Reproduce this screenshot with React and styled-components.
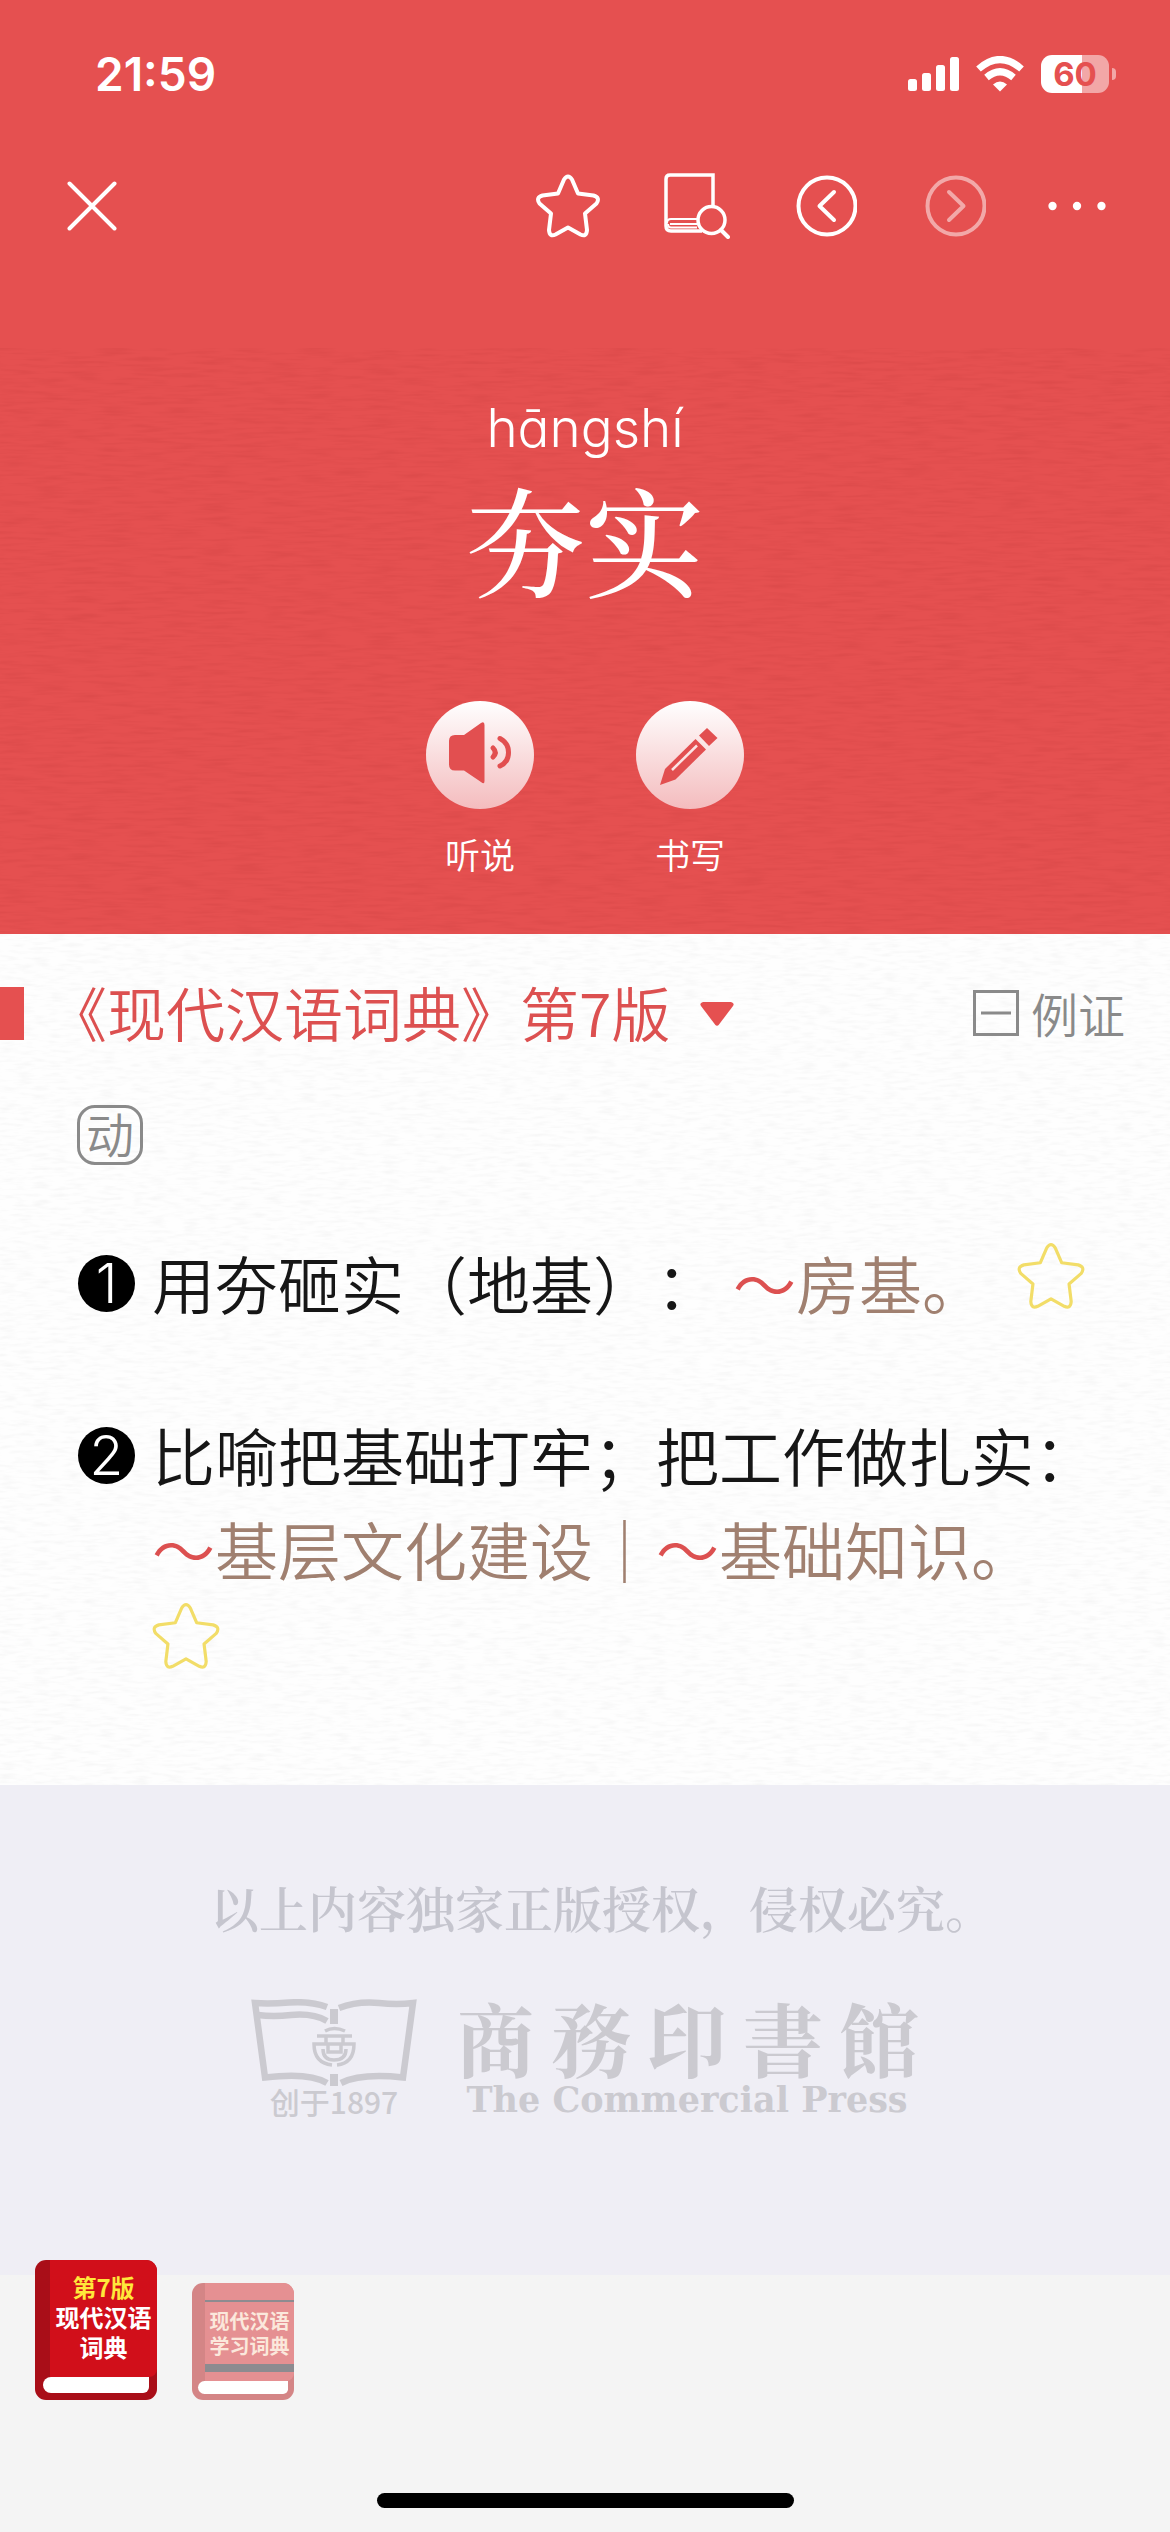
import React from "react";
import styled, { createGlobalStyle } from "styled-components";

const GlobalStyle = createGlobalStyle`
 * {
   box-sizing: border-box;
 }
 body {
   margin: 0;
   background-color: #f4f4f4;
   font-family: "Noto Sans CJK SC", sans-serif;
   text-spacing-trim: space-all;
 }
 button {
   border: 0;
   padding: 0;
   background: none;
   color: inherit;
   font: inherit;
   cursor: pointer;
 }
 h1, h2, p, ol {
   margin: 0;
   padding: 0;
   font-weight: inherit;
 }
 svg {
   display: block;
 }
`;

const Page = styled.div`
 display: flex;
 flex-direction: column;
 min-height: 100vh;
`;

const Header = styled.header`
 background-color: #e55050;
 color: white;
`;

const StatusBar = styled.div`
 display: flex;
 align-items: center;
 justify-content: space-between;
 height: 148px;
 padding: 0 54px 0 95px;
`;

const Clock = styled.time`
 font-family: Inter, sans-serif;
 font-size: 46px;
 font-weight: 600;
`;

const StatusIcons = styled.div`
 display: flex;
 align-items: center;
 gap: 17px;
`;

const BatteryGroup = styled.div`
 display: flex;
 align-items: center;
 gap: 3px;
`;

const Battery = styled.div`
 width: 68px;
 height: 38px;
 border-radius: 11px;
 background: linear-gradient(to right, white 60%, #f2a7a7 60%);
 color: #e55050;
 font-family: Inter, sans-serif;
 font-size: 33px;
 font-weight: 700;
 line-height: 38px;
 text-align: center;
`;

const BatteryCap = styled.div`
 width: 4px;
 height: 12px;
 border-radius: 0 4px 4px 0;
 background-color: #f2a7a7;
`;

const Toolbar = styled.nav`
 display: flex;
 align-items: center;
 justify-content: space-between;
 height: 116px;
 padding: 0 64px 0 56px;
`;

const ToolGroup = styled.div`
 display: flex;
 gap: 57px;
`;

const ToolButton = styled.button`
 display: flex;
 align-items: center;
 justify-content: center;
 width: ${(props) => (props.$narrow ? "58px" : "72px")};
 height: 72px;
 opacity: ${(props) => (props.disabled ? 0.5 : 1)};
`;

const Hero = styled.section`
 position: relative;
 display: flex;
 flex-direction: column;
 align-items: center;
 height: 670px;
 padding-top: 128px;
`;

const Texture = styled.svg`
 position: absolute;
 left: 0;
 top: ${(props) => props.$top || "0"};
 width: 100%;
 height: calc(100% - ${(props) => props.$top || "0px"});
 pointer-events: none;
`;

const Pinyin = styled.p`
 position: relative;
 font-family: Inter, "Noto Sans", sans-serif;
 font-feature-settings: "cv11";
 font-size: 53px;
 font-weight: 300;
 line-height: 72px;
`;

const Headword = styled.h1`
 position: relative;
 font-family: "Noto Serif CJK SC", "Noto Sans CJK SC", serif;
 font-size: 119px;
 font-weight: 500;
 line-height: 148px;
`;

const HeroActions = styled.div`
 position: relative;
 display: flex;
 gap: 102px;
 margin-top: 89px;
`;

const HeroAction = styled.button`
 display: flex;
 flex-direction: column;
 align-items: center;
 gap: 20px;
 font-size: 35px;
 font-weight: 350;
 line-height: 50px;
`;

const ActionDisc = styled.span`
 width: 108px;
 height: 108px;
 border-radius: 50%;
 background: linear-gradient(to bottom, white, #f4bcbe);
`;

const Entry = styled.main`
 position: relative;
 background-color: #fefefe;
 padding-bottom: 115px;
`;

const SourceRow = styled.div`
 position: relative;
 display: flex;
 align-items: center;
 height: 158px;
 padding-right: 45px;
`;

const Marker = styled.span`
 width: 24px;
 height: 53px;
 margin-right: 24px;
 background-color: #e55050;
`;

const SourceButton = styled.button`
 display: flex;
 align-items: center;
 gap: 30px;
 color: #dc5050;
 font-size: 59px;
 font-weight: 350;
 line-height: 76px;
 padding-bottom: 3px;
`;

const ExampleToggle = styled.button`
 display: flex;
 align-items: center;
 gap: 12px;
 margin-left: auto;
 color: #8a8a8a;
 font-size: 47px;
 font-weight: 350;
 line-height: 64px;
`;

const WordClass = styled.span`
 position: relative;
 display: block;
 width: 66px;
 height: 60px;
 margin: 13px 0 70px 77px;
 border: 3px solid #8a8a8a;
 border-radius: 18px;
 color: #8a8a8a;
 font-size: 48px;
 font-weight: 350;
 line-height: 48px;
 text-align: center;
`;

const SenseList = styled.ol`
 position: relative;
 display: flex;
 flex-direction: column;
 gap: 78px;
 padding: 0 48px 0 78px;
 list-style: none;
`;

const Sense = styled.li`
 display: flex;
 align-items: flex-start;
 gap: 17px;
`;

const SenseNumber = styled.span`
 flex: none;
 width: 57px;
 height: 57px;
 margin-top: 20px;
 border-radius: 50%;
 background-color: black;
 color: white;
 font-family: Inter, sans-serif;
 font-size: 55px;
 font-weight: 300;
 line-height: 57px;
 text-align: center;
`;

const SenseBody = styled.div`
 flex: 1;
 display: flex;
 flex-wrap: wrap;
 align-items: flex-start;
 column-gap: 32px;
`;

const SenseText = styled.p`
 color: #161616;
 font-size: 63px;
 font-weight: 350;
 line-height: 94px;
`;

const Example = styled.span`
 color: #a08070;
`;

const Tilde = styled.span`
 color: #dc5050;
`;

const StarButton = styled.button`
 margin-top: 7px;
`;

const Publisher = styled.section`
 display: flex;
 flex-direction: column;
 align-items: center;
 height: 490px;
 padding-top: 86px;
 background-color: #efeef5;
 color: #cbcad0;
`;

const Notice = styled.p`
 width: 750px;
 color: #c5c5ce;
 font-family: "Noto Serif CJK SC", "Noto Sans CJK SC", serif;
 font-size: 49px;
 font-weight: 600;
 line-height: 72px;
 white-space: nowrap;
`;

const Brand = styled.div`
 display: flex;
 gap: 38px;
 margin-top: 56px;
`;

const BrandMark = styled.div`
 display: flex;
 flex-direction: column;
 align-items: center;
 font-size: 30px;
 font-weight: 500;
 line-height: 28px;
`;

const BrandName = styled.div`
 display: flex;
 flex-direction: column;
 align-items: center;
`;

const BrandChinese = styled.div`
 display: flex;
 gap: 16px;
 font-family: "Noto Serif CJK TC", "Noto Sans CJK TC", serif;
 font-size: 80px;
 font-weight: 700;
 line-height: 76px;
`;

const BrandEnglish = styled.div`
 font-family: "DejaVu Serif", serif;
 font-size: 35px;
 font-weight: 700;
 line-height: 50px;
 white-space: nowrap;
`;

const Shelf = styled.footer`
 position: relative;
 flex: 1;
 display: flex;
 flex-direction: column;
 align-items: center;
 justify-content: space-between;
 padding: 0 35px 24px;
`;

const Books = styled.div`
 align-self: flex-start;
 display: flex;
 align-items: flex-end;
 gap: 35px;
 margin-top: -15px;
`;

const BookButton = styled.button`
 display: flex;
 flex-direction: column;
 width: ${(props) => (props.$active ? "122px" : "102px")};
 height: ${(props) => (props.$active ? "140px" : "117px")};
 border-radius: 11px;
 overflow: hidden;
 background-color: ${(props) => (props.$active ? "#a90e18" : "#d48586")};
`;

const BookCover = styled.span`
 flex: 1;
 align-self: stretch;
 display: flex;
 flex-direction: column;
 justify-content: center;
 margin-left: ${(props) => (props.$active ? "15px" : "13px")};
 padding-bottom: ${(props) => (props.$active ? "4px" : "0")};
 border-radius: 0 0 8px 0;
 background-color: ${(props) => (props.$active ? "#d10f1a" : "#e59092")};
 color: ${(props) => (props.$active ? "white" : "#fbe8dc")};
 font-size: ${(props) => (props.$active ? "24px" : "20px")};
 font-weight: 700;
 line-height: ${(props) => (props.$active ? "30px" : "25px")};
 text-align: center;
 white-space: nowrap;
`;

const CoverBand = styled.span`
 height: ${(props) => (props.$thick ? "8px" : "2px")};
 margin: ${(props) => (props.$thick ? "6px 0 0" : "8px 0 6px")};
 background-color: #8d8b90;
`;

const Edition = styled.span`
 color: #ffe83b;
`;

const BookPages = styled.span`
 width: ${(props) => (props.$active ? "106px" : "90px")};
 height: ${(props) => (props.$active ? "16px" : "13px")};
 margin: ${(props) => (props.$active ? "0 8px 7px" : "0 6px 6px")};
 border-radius: 8px 0 6px 8px;
 background-color: white;
`;

const HomeIndicator = styled.div`
 width: 417px;
 height: 15px;
 border-radius: 8px;
 background-color: black;
`;

const PaperTexture = ({ id, top, frequency, matrix }) => (
  <Texture $top={top} aria-hidden="true">
    <filter id={id} x="0" y="0" width="100%" height="100%">
      <feTurbulence type="fractalNoise" baseFrequency={frequency} numOctaves="2" seed="4" />
      <feColorMatrix type="matrix" values={matrix} />
    </filter>
    <rect width="100%" height="100%" filter={`url(#${id})`} />
  </Texture>
);

const Star = ({ size, stroke, strokeWidth }) => (
  <svg width={size} height={size} viewBox="0 0 64 64" fill="none" stroke={stroke} strokeWidth={strokeWidth} strokeLinejoin="round">
    <path d="M28 5.500Q32 -0.500 36 5.500L42 19.500L57.500 21.500Q64.500 23.500 60.500 29.500L49 39.500L51 56Q50.500 63.500 44.500 60.500L32 53.500L19.500 60.500Q13.500 63.500 13 56L15 39.500L3.500 29.500Q-.5 23.500 6.500 21.500L22 19.500Z" />
  </svg>
);

const SignalIcon = () => (
  <svg width="51" height="34" viewBox="0 0 51 34" fill="white">
    <rect x="0" y="22" width="9" height="12" rx="2.500" />
    <rect x="14" y="16" width="9" height="18" rx="2.500" />
    <rect x="28" y="8" width="9" height="26" rx="2.500" />
    <rect x="42" y="0" width="9" height="34" rx="2.500" />
  </svg>
);

const WifiIcon = () => (
  <svg width="48" height="36" viewBox="0 0 48 36">
    <g fill="none" stroke="white" strokeWidth="7">
      <path d="M2.500 13Q24 -6 45.500 13" />
      <path d="M10.500 21.500Q24 10 37.500 21.500" />
    </g>
    <path d="M17 28.500Q24 22.500 31 28.500L24 35.500Z" fill="white" />
  </svg>
);

const CloseIcon = () => (
  <svg width="50" height="50" viewBox="0 0 50 50" stroke="white" strokeWidth="4" strokeLinecap="round">
    <path d="M2.500 2.500L47.500 47.500M47.500 2.500L2.500 47.500" />
  </svg>
);

const BookSearchIcon = () => (
  <svg width="66" height="66" viewBox="0 0 66 66" fill="none" stroke="white" strokeWidth="3.500">
    <path d="M49 33V2H6Q2 2 2 6V53Q2 58 7 58H38" />
    <path d="M33 46H7Q3 46 3 50M33 51H6M33 54.500H7Q4 54.500 4 51" strokeWidth="2" />
    <circle cx="47.500" cy="47" r="13.500" />
    <path d="M57 57L64 64" strokeLinecap="round" strokeWidth="4" />
  </svg>
);

const ArrowIcon = ({ forward }) => (
  <svg width="62" height="62" viewBox="0 0 62 62" fill="none" stroke="white" strokeWidth="4">
    <circle cx="32" cy="31" r="28.500" />
    <path
      d={forward ? "M25 17L39.500 31L25 45" : "M39 17L24.500 31L39 45"}
      strokeLinecap="round"
      strokeLinejoin="round"
    />
  </svg>
);

const MoreIcon = () => (
  <svg width="64" height="10" viewBox="0 0 64 10" fill="white">
    <circle cx="5" cy="5" r="4.600" />
    <circle cx="32" cy="5" r="4.600" />
    <circle cx="59" cy="5" r="4.600" />
  </svg>
);

const SpeakerIcon = () => (
  <svg width="108" height="108" viewBox="0 0 108 108" fill="#e24f50">
    <path d="M29 34H38L55 22Q58.500 20 58.500 24V80Q58.500 84 55 81L38 69.500H29Q23 69.500 23 63.500V40Q23 34 29 34Z" />
    <g fill="none" stroke="#e24f50" strokeWidth="5" strokeLinecap="round">
      <path d="M67 47Q71.500 51.500 67 56" />
      <path d="M74 37.500Q82.500 42 82.500 51.500Q82.500 61 74 65" />
    </g>
  </svg>
);

const PencilIcon = () => (
  <svg width="108" height="108" viewBox="0 0 108 108" fill="#e24f50">
    <path d="M24 84L29 68L59.500 38L70 48.500L39.500 78.500Z" />
    <path d="M36 69L61 44.500" stroke="#fbe3e4" strokeWidth="2.500" />
    <path d="M63 34.500L71 27L81.500 37L73 45Z" />
  </svg>
);

const CaretIcon = () => (
  <svg width="34" height="28" viewBox="0 0 34 28" fill="#e55050">
    <path d="M3 4H31Q35 5 33 8L19 26.500Q17 29 15 26.500L1 8Q-1 5 3 4Z" />
  </svg>
);

const CollapseIcon = () => (
  <svg width="46" height="46" viewBox="0 0 46 46" fill="none" stroke="#8a8a8a" strokeWidth="3">
    <rect x="1.500" y="1.500" width="43" height="43" />
    <path d="M8 23H38" />
  </svg>
);

const PublisherLogo = () => (
  <svg width="166" height="88" viewBox="0 0 166 88" fill="none" stroke="#cbcad0">
    <g strokeWidth="6.500">
      <path d="M76 8Q60 2 38 3.500Q18 5 4 4L14 78.500Q58 73 76 84" />
      <path d="M7 16Q22 18 40 16Q62 14 76 22" />
      <path d="M88 9Q106 2 128 4Q146 6 162 4L152 78.500Q110 74 90 84" />
    </g>
    <path d="M83 10V25M83 75V87" strokeWidth="8" />
    <g strokeWidth="3.500">
      <path d="M74 32Q83 27 94 32" />
      <path d="M66 37H101" />
      <path d="M75 38V45M92 38V45" />
      <path d="M81 66Q63 64 63 45H103Q103 64 86 66" />
      <path d="M72 50Q72 61 83 61Q95 61 95 50" />
      <path d="M77 45V53H90V45" />
    </g>
  </svg>
);

class App extends React.Component {
  render() {
    return (
      <Page>
        <GlobalStyle />
        <Header>
          <StatusBar>
            <Clock>21:59</Clock>
            <StatusIcons>
              <SignalIcon />
              <WifiIcon />
              <BatteryGroup>
                <Battery>60</Battery>
                <BatteryCap />
              </BatteryGroup>
            </StatusIcons>
          </StatusBar>
          <Toolbar>
            <ToolButton aria-label="关闭"><CloseIcon /></ToolButton>
            <ToolGroup>
              <ToolButton aria-label="收藏"><Star size={64} stroke="white" strokeWidth={4} /></ToolButton>
              <ToolButton aria-label="查词典"><BookSearchIcon /></ToolButton>
              <ToolButton aria-label="后退"><ArrowIcon /></ToolButton>
              <ToolButton aria-label="前进" disabled><ArrowIcon forward /></ToolButton>
              <ToolButton aria-label="更多" $narrow><MoreIcon /></ToolButton>
            </ToolGroup>
          </Toolbar>
          <Hero>
            <PaperTexture
              id="red-paper"
              top="84px"
              frequency="0.03 0.3"
              matrix="0 0 0 0 0.6  0 0 0 0 0.05  0 0 0 0 0.05  0.7 0 0 0 -0.29"
            />
            <Pinyin>hāngshí</Pinyin>
            <Headword>夯实</Headword>
            <HeroActions>
              <HeroAction>
                <ActionDisc><SpeakerIcon /></ActionDisc>
                听说
              </HeroAction>
              <HeroAction>
                <ActionDisc><PencilIcon /></ActionDisc>
                书写
              </HeroAction>
            </HeroActions>
          </Hero>
        </Header>

        <Entry>
          <PaperTexture
            id="white-paper"
            frequency="0.06 0.3"
            matrix="0 0 0 0 0.3  0 0 0 0 0.3  0 0 0 0 0.3  0.16 0 0 0 -0.07"
          />
          <SourceRow>
            <Marker />
            <h2>
              <SourceButton>
                《现代汉语词典》第7版
                <CaretIcon />
              </SourceButton>
            </h2>
            <ExampleToggle>
              <CollapseIcon />
              例证
            </ExampleToggle>
          </SourceRow>
          <WordClass>动</WordClass>
          <SenseList>
            <Sense>
              <SenseNumber>1</SenseNumber>
              <SenseBody>
                <SenseText>
                  用夯砸实（地基）： <Example><Tilde>～</Tilde>房基。</Example>
                </SenseText>
                <StarButton aria-label="收藏义项一"><Star size={68} stroke="#f2dd68" strokeWidth={3} /></StarButton>
              </SenseBody>
            </Sense>
            <Sense>
              <SenseNumber>2</SenseNumber>
              <SenseBody>
                <SenseText>
                  比喻把基础打牢；把工作做扎实：
                  <Example><Tilde>～</Tilde>基层文化建设｜<Tilde>～</Tilde>基础知识。</Example>
                </SenseText>
                <StarButton aria-label="收藏义项二"><Star size={68} stroke="#f2dd68" strokeWidth={3} /></StarButton>
              </SenseBody>
            </Sense>
          </SenseList>
        </Entry>

        <Publisher>
          <Notice>以上内容独家正版授权，侵权必究。</Notice>
          <Brand>
            <BrandMark>
              <PublisherLogo />
              创于1897
            </BrandMark>
            <BrandName>
              <BrandChinese>
                <span>商</span>
                <span>務</span>
                <span>印</span>
                <span>書</span>
                <span>館</span>
              </BrandChinese>
              <BrandEnglish>The Commercial Press</BrandEnglish>
            </BrandName>
          </Brand>
        </Publisher>

        <Shelf>
          <Books>
            <BookButton $active>
              <BookCover $active>
                <Edition>第7版</Edition>
                <span>现代汉语</span>
                <span>词典</span>
              </BookCover>
              <BookPages $active />
            </BookButton>
            <BookButton>
              <BookCover>
                <CoverBand />
                <span>现代汉语</span>
                <span>学习词典</span>
                <CoverBand $thick />
              </BookCover>
              <BookPages />
            </BookButton>
          </Books>
          <HomeIndicator />
        </Shelf>
      </Page>
    );
  }
}

export default App;
